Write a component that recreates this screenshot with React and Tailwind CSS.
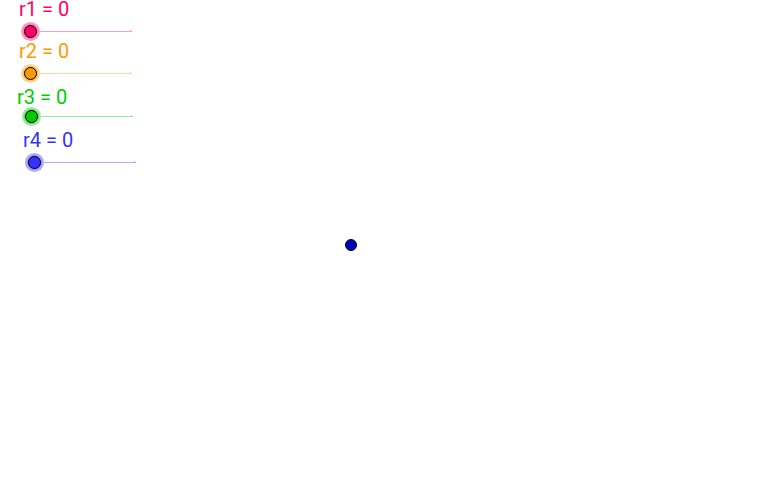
const sliders = [
  {
    name: 'r1',
    label: 'left-[19px] top-0 text-[#ff0066]',
    input: 'left-[24px] top-[25px] text-[#ff0066] [--halo:#ff99c2] [--rim:#f27aa8]',
  },
  {
    name: 'r2',
    label: 'left-[19px] top-[42px] text-[#ff9900]',
    input: 'left-[24px] top-[67px] text-[#ff9900] [--halo:#ffd699] [--rim:#f2bd6e]',
  },
  {
    name: 'r3',
    label: 'left-[17px] top-[88px] text-[#00cc00]',
    input: 'left-[25px] top-[110px] text-[#00cc00] [--halo:#99eb99] [--rim:#74cf74]',
  },
  {
    name: 'r4',
    label: 'left-[23px] top-[131px] text-[#3333ff]',
    input: 'left-[28px] top-[156px] text-[#3333ff] [--halo:#adadff] [--rim:#8c8ce6]',
  },
];

const rangeStyle =
  'absolute h-[13px] w-[108px] cursor-pointer appearance-none bg-transparent outline-none ' +
  'bg-[linear-gradient(var(--halo),var(--halo)),linear-gradient(var(--halo),var(--halo))] bg-no-repeat ' +
  '[background-size:100%_1px,1px_1px] [background-position:0_6px,right_1px_top_5px] ' +
  '[&::-webkit-slider-thumb]:size-[13px] [&::-webkit-slider-thumb]:appearance-none ' +
  '[&::-webkit-slider-thumb]:rounded-full [&::-webkit-slider-thumb]:border ' +
  '[&::-webkit-slider-thumb]:border-solid [&::-webkit-slider-thumb]:border-black ' +
  '[&::-webkit-slider-thumb]:bg-current ' +
  '[&::-webkit-slider-thumb]:shadow-[0_0_0_1px_var(--rim),0_0_0_3px_var(--halo)]';

export default function App() {
  return (
    <main className="relative min-h-screen w-full overflow-hidden bg-white font-[Roboto,sans-serif]">
      {sliders.map((s) => (
        <div key={s.name}>
          <label
            htmlFor={s.name}
            className={`absolute text-[20px] leading-[18px] whitespace-nowrap ${s.label}`}
          >
            {s.name} = 0
          </label>
          <input
            id={s.name}
            type="range"
            min="0"
            max="5"
            step="0.1"
            defaultValue="0"
            className={`${rangeStyle} ${s.input}`}
          />
        </div>
      ))}
      <svg
        className="absolute left-[344px] top-[238px] size-3.5"
        viewBox="0 0 14 14"
        role="img"
        aria-label="Point"
      >
        <circle cx="7" cy="7" r="5.5" fill="#0000cc" stroke="#000" />
        <circle cx="7" cy="7" r="3" fill="none" stroke="#000099" />
      </svg>
    </main>
  );
}
